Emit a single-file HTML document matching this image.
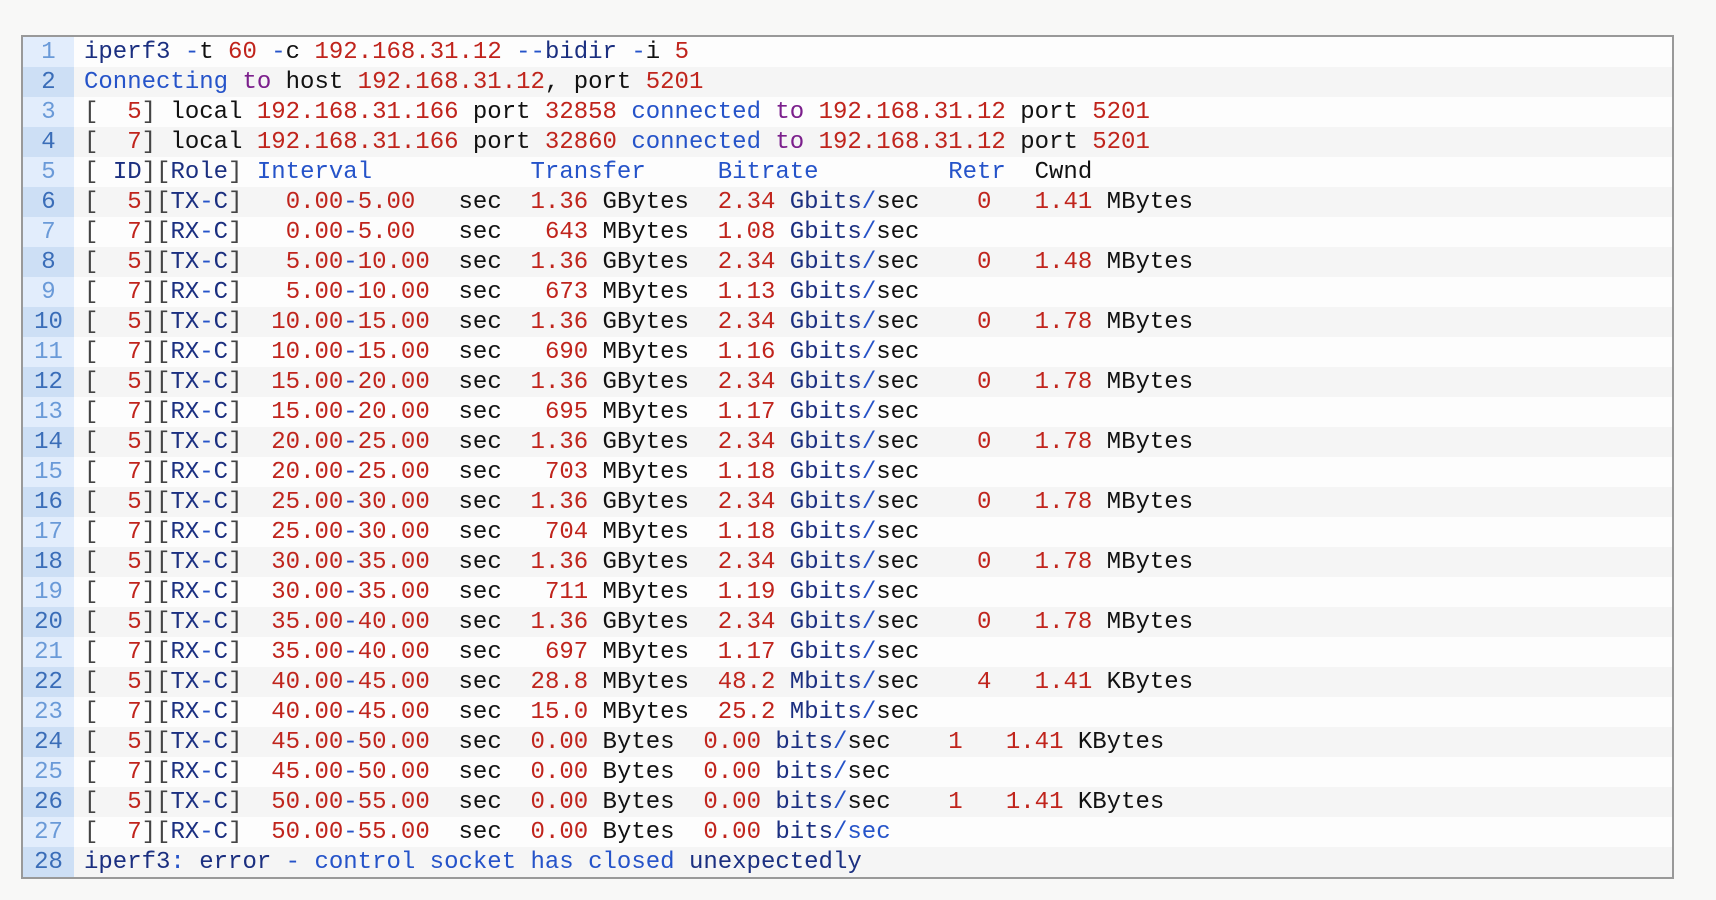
<!DOCTYPE html>
<html><head><meta charset="utf-8"><style>
html,body{margin:0;padding:0;background:#f8f8f7;width:1716px;height:900px;overflow:hidden}
.box{position:absolute;left:21px;top:35px;width:1649px;height:840px;border:2px solid #999;background:#fdfdfd}
.row{height:30px;display:flex;font-family:"Liberation Mono",monospace;font-size:24px;line-height:31px;color:#111;white-space:pre}
.row:nth-child(odd){background:#fdfdfd}
.row:nth-child(even){background:#f5f5f5}
.ln{width:51px;text-align:center;flex:none;background:#e2edfc;color:#6a9ad8}
.row:nth-child(even) .ln{background:#cddff5;color:#3a6db8}
.tx{padding-left:10px}
i{font-style:normal}
.r{color:#c0241c}.n{color:#1b2f80}.b{color:#2553c9}.p{color:#7b1f8c}.g{color:#444}
</style></head><body><div class="box">
<div class="row"><span class="ln">1</span><span class="tx"><i class=n>iperf3</i> <i class=b>-</i>t <i class=r>60</i> <i class=b>-</i>c <i class=r>192.168.31.12</i> <i class=b>--</i><i class=n>bidir</i> <i class=b>-</i>i <i class=r>5</i></span></div>
<div class="row"><span class="ln">2</span><span class="tx"><i class=b>Connecting</i> <i class=p>to</i> host <i class=r>192.168.31.12</i>, port <i class=r>5201</i></span></div>
<div class="row"><span class="ln">3</span><span class="tx"><i class=g>[</i>  <i class=r>5</i><i class=g>]</i> local <i class=r>192.168.31.166</i> port <i class=r>32858</i> <i class=b>connected</i> <i class=p>to</i> <i class=r>192.168.31.12</i> port <i class=r>5201</i></span></div>
<div class="row"><span class="ln">4</span><span class="tx"><i class=g>[</i>  <i class=r>7</i><i class=g>]</i> local <i class=r>192.168.31.166</i> port <i class=r>32860</i> <i class=b>connected</i> <i class=p>to</i> <i class=r>192.168.31.12</i> port <i class=r>5201</i></span></div>
<div class="row"><span class="ln">5</span><span class="tx"><i class=g>[</i> <i class=n>ID</i><i class=g>][</i><i class=n>Role</i><i class=g>]</i> <i class=b>Interval</i>           <i class=b>Transfer</i>     <i class=b>Bitrate</i>         <i class=b>Retr</i>  Cwnd</span></div>
<div class="row"><span class="ln">6</span><span class="tx"><i class=g>[</i>  <i class=r>5</i><i class=g>][</i><i class=n>TX</i><i class=b>-</i><i class=n>C</i><i class=g>]</i>   <i class=r>0.00</i><i class=b>-</i><i class=r>5.00</i>   sec  <i class=r>1.36</i> GBytes  <i class=r>2.34</i> <i class=n>Gbits</i><i class=b>/</i>sec    <i class=r>0</i>   <i class=r>1.41</i> MBytes</span></div>
<div class="row"><span class="ln">7</span><span class="tx"><i class=g>[</i>  <i class=r>7</i><i class=g>][</i><i class=n>RX</i><i class=b>-</i><i class=n>C</i><i class=g>]</i>   <i class=r>0.00</i><i class=b>-</i><i class=r>5.00</i>   sec   <i class=r>643</i> MBytes  <i class=r>1.08</i> <i class=n>Gbits</i><i class=b>/</i>sec</span></div>
<div class="row"><span class="ln">8</span><span class="tx"><i class=g>[</i>  <i class=r>5</i><i class=g>][</i><i class=n>TX</i><i class=b>-</i><i class=n>C</i><i class=g>]</i>   <i class=r>5.00</i><i class=b>-</i><i class=r>10.00</i>  sec  <i class=r>1.36</i> GBytes  <i class=r>2.34</i> <i class=n>Gbits</i><i class=b>/</i>sec    <i class=r>0</i>   <i class=r>1.48</i> MBytes</span></div>
<div class="row"><span class="ln">9</span><span class="tx"><i class=g>[</i>  <i class=r>7</i><i class=g>][</i><i class=n>RX</i><i class=b>-</i><i class=n>C</i><i class=g>]</i>   <i class=r>5.00</i><i class=b>-</i><i class=r>10.00</i>  sec   <i class=r>673</i> MBytes  <i class=r>1.13</i> <i class=n>Gbits</i><i class=b>/</i>sec</span></div>
<div class="row"><span class="ln">10</span><span class="tx"><i class=g>[</i>  <i class=r>5</i><i class=g>][</i><i class=n>TX</i><i class=b>-</i><i class=n>C</i><i class=g>]</i>  <i class=r>10.00</i><i class=b>-</i><i class=r>15.00</i>  sec  <i class=r>1.36</i> GBytes  <i class=r>2.34</i> <i class=n>Gbits</i><i class=b>/</i>sec    <i class=r>0</i>   <i class=r>1.78</i> MBytes</span></div>
<div class="row"><span class="ln">11</span><span class="tx"><i class=g>[</i>  <i class=r>7</i><i class=g>][</i><i class=n>RX</i><i class=b>-</i><i class=n>C</i><i class=g>]</i>  <i class=r>10.00</i><i class=b>-</i><i class=r>15.00</i>  sec   <i class=r>690</i> MBytes  <i class=r>1.16</i> <i class=n>Gbits</i><i class=b>/</i>sec</span></div>
<div class="row"><span class="ln">12</span><span class="tx"><i class=g>[</i>  <i class=r>5</i><i class=g>][</i><i class=n>TX</i><i class=b>-</i><i class=n>C</i><i class=g>]</i>  <i class=r>15.00</i><i class=b>-</i><i class=r>20.00</i>  sec  <i class=r>1.36</i> GBytes  <i class=r>2.34</i> <i class=n>Gbits</i><i class=b>/</i>sec    <i class=r>0</i>   <i class=r>1.78</i> MBytes</span></div>
<div class="row"><span class="ln">13</span><span class="tx"><i class=g>[</i>  <i class=r>7</i><i class=g>][</i><i class=n>RX</i><i class=b>-</i><i class=n>C</i><i class=g>]</i>  <i class=r>15.00</i><i class=b>-</i><i class=r>20.00</i>  sec   <i class=r>695</i> MBytes  <i class=r>1.17</i> <i class=n>Gbits</i><i class=b>/</i>sec</span></div>
<div class="row"><span class="ln">14</span><span class="tx"><i class=g>[</i>  <i class=r>5</i><i class=g>][</i><i class=n>TX</i><i class=b>-</i><i class=n>C</i><i class=g>]</i>  <i class=r>20.00</i><i class=b>-</i><i class=r>25.00</i>  sec  <i class=r>1.36</i> GBytes  <i class=r>2.34</i> <i class=n>Gbits</i><i class=b>/</i>sec    <i class=r>0</i>   <i class=r>1.78</i> MBytes</span></div>
<div class="row"><span class="ln">15</span><span class="tx"><i class=g>[</i>  <i class=r>7</i><i class=g>][</i><i class=n>RX</i><i class=b>-</i><i class=n>C</i><i class=g>]</i>  <i class=r>20.00</i><i class=b>-</i><i class=r>25.00</i>  sec   <i class=r>703</i> MBytes  <i class=r>1.18</i> <i class=n>Gbits</i><i class=b>/</i>sec</span></div>
<div class="row"><span class="ln">16</span><span class="tx"><i class=g>[</i>  <i class=r>5</i><i class=g>][</i><i class=n>TX</i><i class=b>-</i><i class=n>C</i><i class=g>]</i>  <i class=r>25.00</i><i class=b>-</i><i class=r>30.00</i>  sec  <i class=r>1.36</i> GBytes  <i class=r>2.34</i> <i class=n>Gbits</i><i class=b>/</i>sec    <i class=r>0</i>   <i class=r>1.78</i> MBytes</span></div>
<div class="row"><span class="ln">17</span><span class="tx"><i class=g>[</i>  <i class=r>7</i><i class=g>][</i><i class=n>RX</i><i class=b>-</i><i class=n>C</i><i class=g>]</i>  <i class=r>25.00</i><i class=b>-</i><i class=r>30.00</i>  sec   <i class=r>704</i> MBytes  <i class=r>1.18</i> <i class=n>Gbits</i><i class=b>/</i>sec</span></div>
<div class="row"><span class="ln">18</span><span class="tx"><i class=g>[</i>  <i class=r>5</i><i class=g>][</i><i class=n>TX</i><i class=b>-</i><i class=n>C</i><i class=g>]</i>  <i class=r>30.00</i><i class=b>-</i><i class=r>35.00</i>  sec  <i class=r>1.36</i> GBytes  <i class=r>2.34</i> <i class=n>Gbits</i><i class=b>/</i>sec    <i class=r>0</i>   <i class=r>1.78</i> MBytes</span></div>
<div class="row"><span class="ln">19</span><span class="tx"><i class=g>[</i>  <i class=r>7</i><i class=g>][</i><i class=n>RX</i><i class=b>-</i><i class=n>C</i><i class=g>]</i>  <i class=r>30.00</i><i class=b>-</i><i class=r>35.00</i>  sec   <i class=r>711</i> MBytes  <i class=r>1.19</i> <i class=n>Gbits</i><i class=b>/</i>sec</span></div>
<div class="row"><span class="ln">20</span><span class="tx"><i class=g>[</i>  <i class=r>5</i><i class=g>][</i><i class=n>TX</i><i class=b>-</i><i class=n>C</i><i class=g>]</i>  <i class=r>35.00</i><i class=b>-</i><i class=r>40.00</i>  sec  <i class=r>1.36</i> GBytes  <i class=r>2.34</i> <i class=n>Gbits</i><i class=b>/</i>sec    <i class=r>0</i>   <i class=r>1.78</i> MBytes</span></div>
<div class="row"><span class="ln">21</span><span class="tx"><i class=g>[</i>  <i class=r>7</i><i class=g>][</i><i class=n>RX</i><i class=b>-</i><i class=n>C</i><i class=g>]</i>  <i class=r>35.00</i><i class=b>-</i><i class=r>40.00</i>  sec   <i class=r>697</i> MBytes  <i class=r>1.17</i> <i class=n>Gbits</i><i class=b>/</i>sec</span></div>
<div class="row"><span class="ln">22</span><span class="tx"><i class=g>[</i>  <i class=r>5</i><i class=g>][</i><i class=n>TX</i><i class=b>-</i><i class=n>C</i><i class=g>]</i>  <i class=r>40.00</i><i class=b>-</i><i class=r>45.00</i>  sec  <i class=r>28.8</i> MBytes  <i class=r>48.2</i> <i class=n>Mbits</i><i class=b>/</i>sec    <i class=r>4</i>   <i class=r>1.41</i> KBytes</span></div>
<div class="row"><span class="ln">23</span><span class="tx"><i class=g>[</i>  <i class=r>7</i><i class=g>][</i><i class=n>RX</i><i class=b>-</i><i class=n>C</i><i class=g>]</i>  <i class=r>40.00</i><i class=b>-</i><i class=r>45.00</i>  sec  <i class=r>15.0</i> MBytes  <i class=r>25.2</i> <i class=n>Mbits</i><i class=b>/</i>sec</span></div>
<div class="row"><span class="ln">24</span><span class="tx"><i class=g>[</i>  <i class=r>5</i><i class=g>][</i><i class=n>TX</i><i class=b>-</i><i class=n>C</i><i class=g>]</i>  <i class=r>45.00</i><i class=b>-</i><i class=r>50.00</i>  sec  <i class=r>0.00</i> Bytes  <i class=r>0.00</i> <i class=n>bits</i><i class=b>/</i>sec    <i class=r>1</i>   <i class=r>1.41</i> KBytes</span></div>
<div class="row"><span class="ln">25</span><span class="tx"><i class=g>[</i>  <i class=r>7</i><i class=g>][</i><i class=n>RX</i><i class=b>-</i><i class=n>C</i><i class=g>]</i>  <i class=r>45.00</i><i class=b>-</i><i class=r>50.00</i>  sec  <i class=r>0.00</i> Bytes  <i class=r>0.00</i> <i class=n>bits</i><i class=b>/</i>sec</span></div>
<div class="row"><span class="ln">26</span><span class="tx"><i class=g>[</i>  <i class=r>5</i><i class=g>][</i><i class=n>TX</i><i class=b>-</i><i class=n>C</i><i class=g>]</i>  <i class=r>50.00</i><i class=b>-</i><i class=r>55.00</i>  sec  <i class=r>0.00</i> Bytes  <i class=r>0.00</i> <i class=n>bits</i><i class=b>/</i>sec    <i class=r>1</i>   <i class=r>1.41</i> KBytes</span></div>
<div class="row"><span class="ln">27</span><span class="tx"><i class=g>[</i>  <i class=r>7</i><i class=g>][</i><i class=n>RX</i><i class=b>-</i><i class=n>C</i><i class=g>]</i>  <i class=r>50.00</i><i class=b>-</i><i class=r>55.00</i>  sec  <i class=r>0.00</i> Bytes  <i class=r>0.00</i> <i class=n>bits</i><i class=b>/sec</i></span></div>
<div class="row"><span class="ln">28</span><span class="tx"><i class=n>iperf3</i><i class=b>:</i> <i class=n>error</i> <i class=b>- control socket has closed</i> <i class=n>unexpectedly</i></span></div>
</div></body></html>
